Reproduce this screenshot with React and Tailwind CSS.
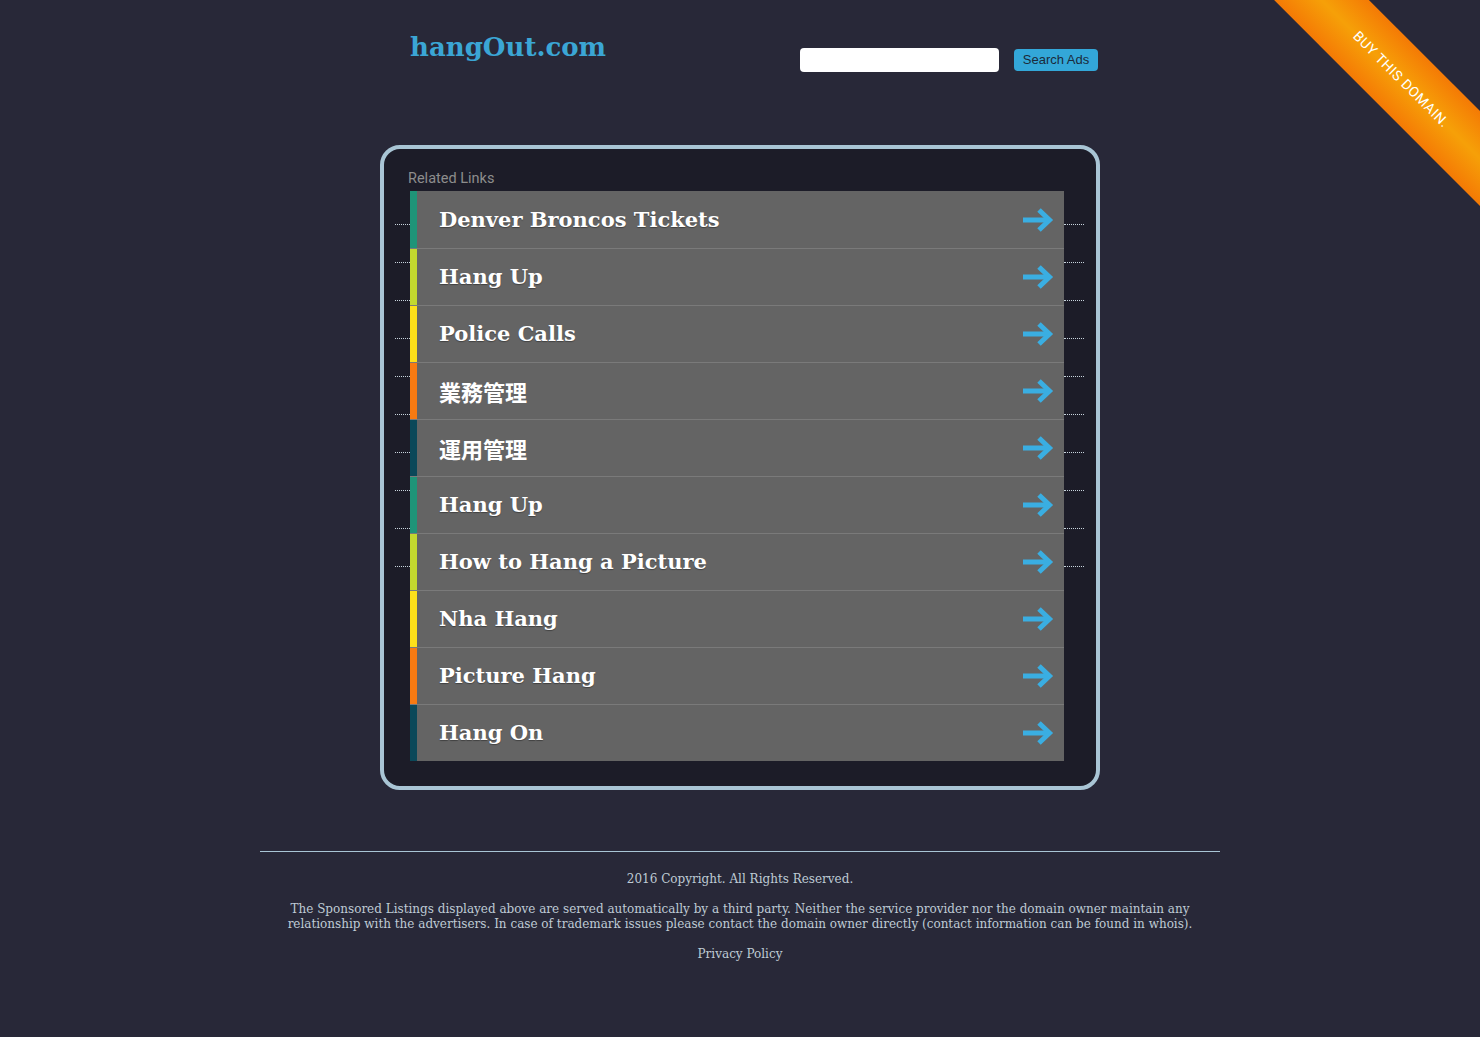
import React from 'react';

const links = [
  { label: 'Denver Broncos Tickets', stripe: 'bg-[#1f9478]' },
  { label: 'Hang Up', stripe: 'bg-[#c3d82f]' },
  { label: 'Police Calls', stripe: 'bg-[#fde01a]' },
  { label: '業務管理', stripe: 'bg-[#f77a12]', cjk: true },
  { label: '運用管理', stripe: 'bg-[#0b4859]', cjk: true },
  { label: 'Hang Up', stripe: 'bg-[#1f9478]' },
  { label: 'How to Hang a Picture', stripe: 'bg-[#c3d82f]' },
  { label: 'Nha Hang', stripe: 'bg-[#fde01a]' },
  { label: 'Picture Hang', stripe: 'bg-[#f77a12]' },
  { label: 'Hang On', stripe: 'bg-[#0b4859]' },
];

const serif = 'font-["DejaVu_Serif",serif]';

function Arrow() {
  return (
    <svg width="32" height="26" viewBox="0 0 32 26" fill="none">
      <path d="M1 13H27" stroke="#3aaee2" strokeWidth="5" />
      <path d="M17 3L27.5 13L17 23" stroke="#3aaee2" strokeWidth="5" strokeLinejoin="miter" />
    </svg>
  );
}

// dotted rules that peek out on either side of the list
function Gutter({ width }) {
  return (
    <div className={`flex flex-col ${width}`}>
      <div className="h-[33px]" />
      {Array.from({ length: 10 }).map((_, i) => (
        <div key={i} className="h-[38px] border-t border-dotted border-[#c9d5de]" />
      ))}
    </div>
  );
}

function LinkRow({ label, stripe, cjk, first }) {
  return (
    <div className={`flex h-[57px] bg-[#646464] ${first ? '' : 'border-t border-[#7a7a7a]'}`}>
      <div className={`w-[7px] ${stripe}`} />
      <div className="flex flex-1 items-center justify-between pl-[22px] pr-[10px]">
        <span
          className={
            cjk
              ? 'font-["Noto_Sans_CJK_JP",sans-serif] font-bold text-[22px] text-white'
              : `${serif} text-[21px] font-bold text-white [text-shadow:0_1px_1px_rgba(0,0,0,0.35)]`
          }
        >
          {label}
        </span>
        <Arrow />
      </div>
    </div>
  );
}

export default function App() {
  return (
    <div className="relative min-h-[1037px] overflow-hidden bg-[#282838]">
      {/* corner ribbon */}
      <div className="absolute right-0 top-0 h-[220px] w-[220px] overflow-hidden">
        <div className="absolute left-[-29px] top-[46px] flex h-[67px] w-[340px] rotate-45 items-center justify-center bg-gradient-to-b from-[#f47a05] via-[#f6a008] to-[#f47a05]">
          <span className='font-["Roboto",sans-serif] text-[14px] tracking-[0.5px] text-white'>BUY THIS DOMAIN.</span>
        </div>
      </div>

      <header className="mx-auto flex h-[145px] w-[720px] items-start justify-between pl-[30px] pr-[2px] pt-[28px]">
        <h1 className={`${serif} text-[26px] font-bold leading-[38px] text-[#3ba6d5]`}>hangOut.com</h1>
        <div className="mt-[20px] flex items-start gap-[15px]">
          <input className="h-[24px] w-[199px] rounded-[4px] bg-white outline-none" />
          <button className='mt-[1px] h-[22px] w-[84px] rounded-[4px] bg-[#33a7d8] font-["Liberation_Sans",sans-serif] text-[13px] text-[#1b2a3a]'>
            Search Ads
          </button>
        </div>
      </header>

      <main className="mx-auto w-[720px] rounded-[20px] border-4 border-[#a9c5d5] bg-[#1c1c28] pb-[25px] pl-[11px] pr-[12px] pt-[17px]">
        <p className='pl-[13px] font-["Roboto",sans-serif] text-[14.5px] leading-[25px] text-[#8d8d8d]'>Related Links</p>
        <div className="flex">
          <Gutter width="w-[15px]" />
          <div className="w-[654px]">
            {links.map((l, i) => (
              <LinkRow key={i} {...l} first={i === 0} />
            ))}
          </div>
          <Gutter width="w-[20px]" />
        </div>
      </main>

      <footer className={`mx-auto mt-[61px] w-[960px] border-t border-[#a9c5d5] pt-[20px] text-center ${serif} text-[12px] leading-[15px] text-[#bfcbd5]`}>
        <p>2016 Copyright. All Rights Reserved.</p>
        <p className="mx-auto mt-[15px] w-[930px]">
          The Sponsored Listings displayed above are served automatically by a third party. Neither the service provider nor the domain owner maintain any relationship with the advertisers. In case of trademark issues please contact the domain owner directly (contact information can be found in whois).
        </p>
        <p className="mt-[15px]">Privacy Policy</p>
      </footer>
    </div>
  );
}
